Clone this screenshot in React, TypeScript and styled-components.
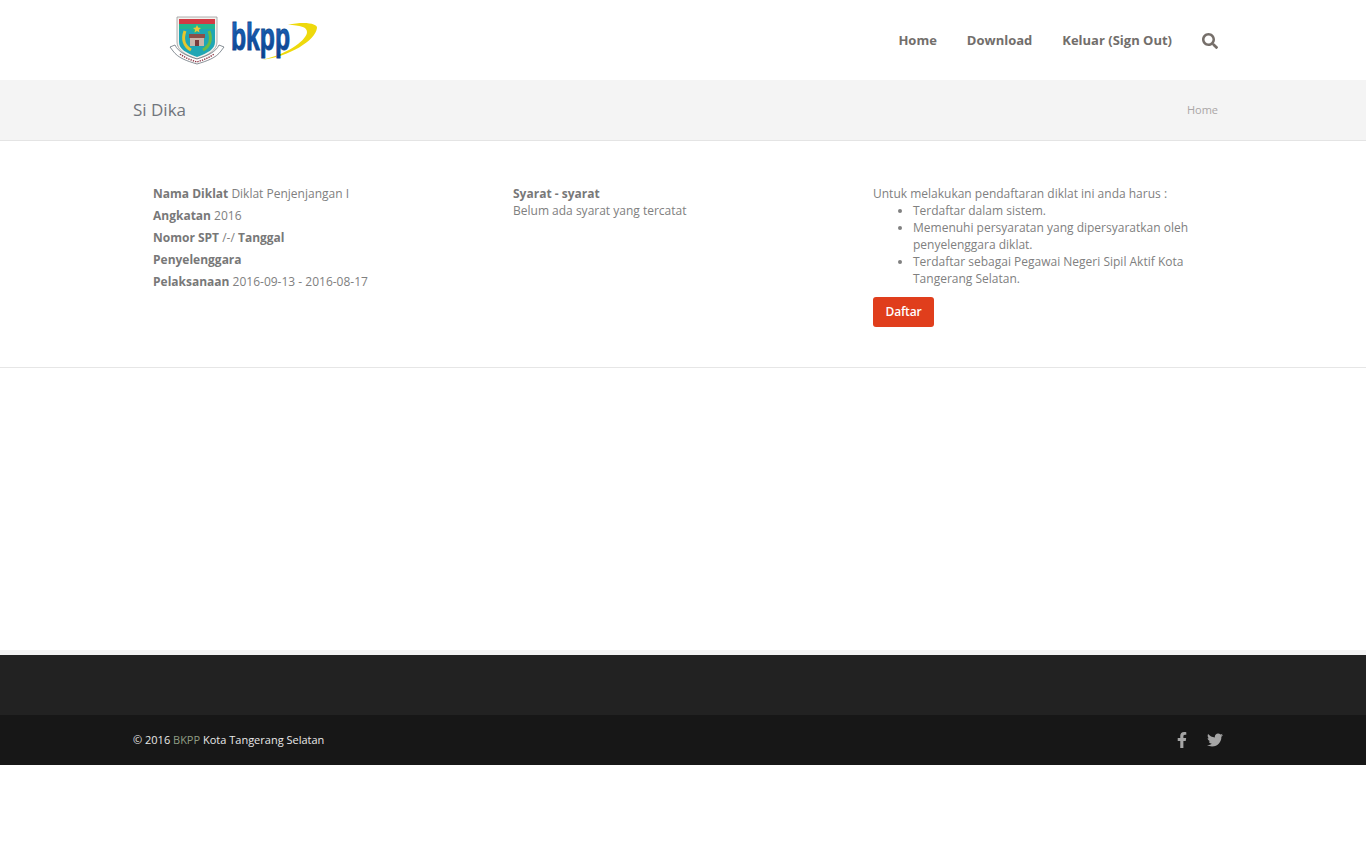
import React from "react";
import styled, { createGlobalStyle } from "styled-components";
import { FaSearch, FaFacebookF, FaTwitter } from "react-icons/fa";

const Global = createGlobalStyle`
  html, body { margin: 0; padding: 0; background: #fff; }
  body { font-family: "Open Sans", "Liberation Sans", sans-serif; font-size: 13px; color: #808080; }
  * { box-sizing: border-box; }
`;

const Page = styled.div`
  display: flex;
  flex-direction: column;
  min-height: 845px;
`;

const Wrap = styled.div`
  width: 1085px;
  margin-left: 133px;
  display: flex;
  align-items: center;
  justify-content: space-between;
  height: 100%;
`;

const Header = styled.header`
  height: 80px;
  background: #fff;
`;

const LogoBox = styled.div`
  margin-left: 35px;
  display: flex;
`;

const Nav = styled.nav`
  display: flex;
  align-items: center;
  gap: 30px;
`;

const NavLink = styled.a`
  font-size: 13px;
  font-weight: 700;
  color: #726e6b;
  text-decoration: none;
`;

const SearchIcon = styled(FaSearch)`
  width: 16px;
  height: 16px;
  margin-top: 1px;
  color: #766f6a;
`;

const TitleBar = styled.div`
  height: 61px;
  background: #f4f4f4;
  border-bottom: 1px solid #e4e4e4;
`;

const Title = styled.h1`
  margin: -2px 0 0;
  font-size: 17px;
  font-weight: 400;
  color: #70757c;
`;

const Crumb = styled.span`
  font-size: 11px;
  color: #aaa6a6;
  margin-top: -2px;
`;

const Main = styled.main`
  height: 227px;
  border-bottom: 1px solid #e6e6e6;
  padding: 44px 0 0 133px;
  display: flex;
`;

const Col = styled.section`
  width: 360px;
  padding: 0 20px;
  line-height: 17px;
  font-size: 12px;
`;

const Facts = styled.div`
  line-height: 22px;
  margin-top: -2px;
`;

const Strong = styled.strong`
  font-weight: 700;
  color: #787878;
`;

const List = styled.ul`
  margin: 0 0 10px;
  padding-left: 40px;
`;

const Button = styled.button`
  display: block;
  width: 61px;
  height: 30px;
  padding: 0 0 2px;
  border: 0;
  border-radius: 3px;
  background: #e03e1c;
  color: #fff;
  font-family: inherit;
  font-size: 12px;
  font-weight: 600;
  letter-spacing: -0.2px;
`;

const Spacer = styled.div`
  height: 282px;
`;

const Strip = styled.div`
  height: 5px;
  background: #f4f4f4;
`;

const FooterTop = styled.div`
  height: 60px;
  background: #222;
`;

const FooterBottom = styled.footer`
  height: 50px;
  background: #171717;
`;

const Copy = styled.div`
  font-size: 11px;
  color: #e8e8e8;
  margin-top: -2px;
`;

const Accent = styled.span`
  color: #8f9d84;
`;

const Social = styled.div`
  display: flex;
  align-items: center;
  gap: 17px;
  margin-right: -5px;
  color: #a5a5a5;
  font-size: 16px;
`;

const Logo = () => (
  <svg width="160" height="52" viewBox="0 0 160 52">
    <defs>
      <linearGradient id="bk" x1="0" y1="0" x2="0" y2="1">
        <stop offset="0" stopColor="#1c6cc4" />
        <stop offset="1" stopColor="#0b3f8c" />
      </linearGradient>
    </defs>
    <path d="M9 3h40v25c0 8-8 13-20 17C17 41 9 36 9 28z" fill="#f4f2ee" stroke="#9a9a9a" strokeWidth="0.8" />
    <rect x="11" y="5" width="36" height="5" fill="#d23a44" />
    <path d="M11 10h36v18c0 7-7 11-18 15-11-4-18-8-18-15z" fill="#1fa6b4" />
    <path d="M11 10h36v5H36c-6 0-8 5-7 5-3 0-5-5-9-5h-9z" fill="#23b58f" />
    <path d="M17 17c-3 8-1 15 6 19" fill="none" stroke="#e6c72c" strokeWidth="3" />
    <path d="M41 17c3 8 1 15-6 19" fill="none" stroke="#6dbb45" strokeWidth="3" />
    <path d="M29 11l1.2 2.6 2.8.3-2.1 1.8.6 2.8-2.5-1.5-2.5 1.5.6-2.8-2.1-1.8 2.8-.3z" fill="#e8c83a" />
    <rect x="21" y="20" width="16" height="4" fill="#8b5048" />
    <rect x="22" y="24" width="14" height="8" fill="#cbb5aa" />
    <rect x="27" y="26" width="4" height="6" fill="#7a3c3c" />
    <path d="M2 33l5-2c3 7 12 11 22 14 10-3 19-7 22-14l5 2-3 4c-5 7-14 10-24 13C19 47 10 44 5 37z" fill="#fff" stroke="#55606a" strokeWidth="0.7" />
    <path d="M12 40c5 4 11 6 17 8 6-2 12-4 17-8" fill="none" stroke="#8f3a48" strokeWidth="1.4" strokeDasharray="1.4 1" />
    <path d="M94 46C122 42 147 27 149 14c1-4-12-7-29-3 12 0 19 2 19 7 0 7-16 21-45 28z" fill="#eed90c" />
    <text x="63" y="36" fontFamily="Liberation Sans, sans-serif" fontWeight="700" fontSize="38" fill="url(#bk)" stroke="#0d478f" strokeWidth="0.9" textLength="59" lengthAdjust="spacingAndGlyphs">bkpp</text>
  </svg>
);

export default function App() {
  return (
    <Page>
      <Global />
      <Header>
        <Wrap>
          <LogoBox><Logo /></LogoBox>
          <Nav>
            <NavLink>Home</NavLink>
            <NavLink>Download</NavLink>
            <NavLink>Keluar (Sign Out)</NavLink>
            <SearchIcon />
          </Nav>
        </Wrap>
      </Header>
      <TitleBar>
        <Wrap>
          <Title>Si Dika</Title>
          <Crumb>Home</Crumb>
        </Wrap>
      </TitleBar>
      <Main>
        <Col>
          <Facts>
            <Strong>Nama Diklat</Strong> Diklat Penjenjangan I<br />
            <Strong>Angkatan</Strong> 2016<br />
            <Strong>Nomor SPT</Strong> /-/ <Strong>Tanggal</Strong><br />
            <Strong>Penyelenggara</Strong><br />
            <Strong>Pelaksanaan</Strong> 2016-09-13 - 2016-08-17
          </Facts>
        </Col>
        <Col>
          <Strong>Syarat - syarat</Strong><br />
          Belum ada syarat yang tercatat
        </Col>
        <Col>
          Untuk melakukan pendaftaran diklat ini anda harus :
          <List>
            <li>Terdaftar dalam sistem.</li>
            <li>Memenuhi persyaratan yang dipersyaratkan oleh penyelenggara diklat.</li>
            <li>Terdaftar sebagai Pegawai Negeri Sipil Aktif Kota Tangerang Selatan.</li>
          </List>
          <Button>Daftar</Button>
        </Col>
      </Main>
      <Spacer />
      <Strip />
      <FooterTop />
      <FooterBottom>
        <Wrap>
          <Copy>© 2016 <Accent>BKPP</Accent> Kota Tangerang Selatan</Copy>
          <Social>
            <FaFacebookF />
            <FaTwitter />
          </Social>
        </Wrap>
      </FooterBottom>
    </Page>
  );
}
